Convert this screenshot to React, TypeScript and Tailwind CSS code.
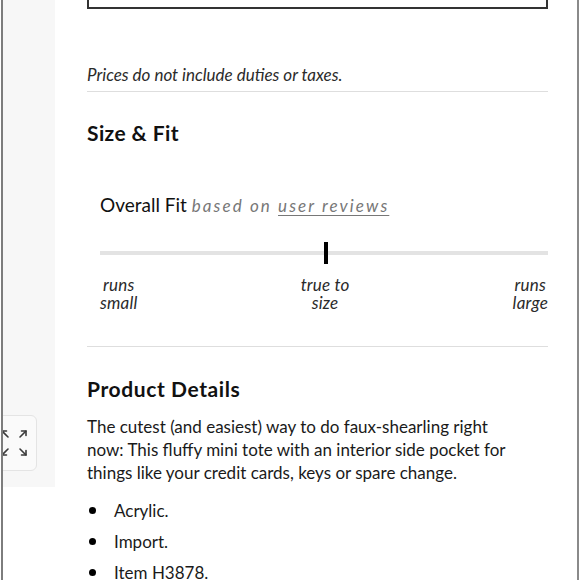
import React from "react";

function ExpandIcon() {
  return (
    <svg width="30" height="30" viewBox="0 0 30 30" fill="none" stroke="#3a3a3a" strokeWidth="1.6" strokeLinecap="round" strokeLinejoin="round">
      {/* north-west */}
      <path d="M9 9 3 3" />
      <path d="M3 7.5V3h4.5" />
      {/* north-east */}
      <path d="M21 9l6-6" />
      <path d="M22.5 3H27v4.5" />
      {/* south-west */}
      <path d="M9 21l-6 6" />
      <path d="M3 22.5V27h4.5" />
      {/* south-east */}
      <path d="M21 21l6 6" />
      <path d="M27 22.5V27h-4.5" />
    </svg>
  );
}

function FitScale() {
  return (
    <div className="pl-[13px]">
      <div className="mt-[23px] relative h-[22px] flex items-center">
        <div className="w-full h-[4px] bg-[#e3e3e3]" />
        <div className="absolute left-[224px] top-0 w-[4px] h-[22px] bg-black" />
      </div>
      <div className="mt-[12px] flex justify-between italic text-[17px] leading-[18px] text-[#2a2a2a] tracking-[0.2px]">
        <div className="text-center">
          runs
          <br />
          small
        </div>
        <div className="text-center">
          true to
          <br />
          size
        </div>
        <div className="text-center">
          runs
          <br />
          large
        </div>
      </div>
    </div>
  );
}

const bullets = ["Acrylic.", "Import.", "Item H3878."];

export default function App() {
  return (
    <div className="w-[580px] h-[580px] overflow-hidden bg-white flex font-['Lato',sans-serif] text-[#1a1a1a]">
      <div className="w-px shrink-0" />
      <div className="w-[2px] shrink-0 bg-[#7d7d7d]" />
      {/* side rail with the image expand control */}
      <div className="w-[52px] shrink-0 h-[487px] bg-[#f7f7f7] overflow-hidden">
        <div className="mt-[415px] ml-[-13px] w-[47px] h-[56px] rounded-md border border-[#e4e4e4] bg-[#fafafa] flex items-center justify-center">
          <ExpandIcon />
        </div>
      </div>

      <div className="ml-[32px] w-[461px] shrink-0">
        <div className="mt-[-31px] h-[40px] border-2 border-[#333]" />

        <p className="mt-[54px] italic text-[17px] leading-[24px] text-[#2b2b2b]">
          Prices do not include duties or taxes.
        </p>
        <div className="mt-[4px] h-px bg-[#dedede]" />

        <h2 className="mt-[27px] text-[21px] leading-[28px] font-bold tracking-[0.4px] text-[#111]">Size &amp; Fit</h2>

        <div className="mt-[45px] pl-[13px] text-[19px] leading-[26px] whitespace-nowrap">
          <span className="text-[#111]">Overall Fit</span>{" "}
          <span className="italic text-[17px] text-[#777] tracking-[2.1px]">
            based on <span className="underline underline-offset-[3px]">user reviews</span>
          </span>
        </div>

        <FitScale />

        <div className="mt-[34px] h-px bg-[#dedede]" />

        <h2 className="mt-[28px] text-[21px] leading-[28px] font-bold tracking-[0.6px] text-[#111]">Product Details</h2>

        <p className="mt-[12px] w-[440px] text-[17px] leading-[23px] text-[#1a1a1a]">
          The cutest (and easiest) way to do faux-shearling right now: This fluffy mini tote with an interior side pocket for things like your credit cards, keys or spare change.
        </p>

        <ul className="mt-[11px]">
          {bullets.map((b) => (
            <li key={b} className="h-[31px] flex items-center text-[17px]">
              <span className="ml-[2px] w-[7px] h-[7px] rounded-full bg-black" />
              <span className="ml-[18px]">{b}</span>
            </li>
          ))}
        </ul>
      </div>

      <div className="flex-1" />
      <div className="w-[2px] shrink-0 bg-[#8a8a8a]" />
      <div className="w-px shrink-0" />
    </div>
  );
}
